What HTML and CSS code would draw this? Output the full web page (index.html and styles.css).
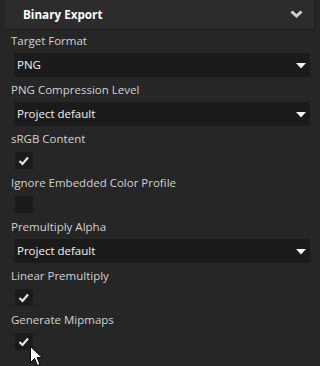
FILE: index.html
```html
<!DOCTYPE html>
<html>
<head>
<meta charset="utf-8">
<link rel="stylesheet" href="styles.css">
</head>
<body>
<div class="panel">
  <div class="header">
    <span class="title">Binary Export</span>
    <svg class="chevron" width="13" height="8" viewBox="0 0 13 8"><polyline points="1.5,1.5 6.5,6 11.5,1.5" fill="none" stroke="#cfcfcf" stroke-width="3"/></svg>
  </div>
  <div class="body">
    <div class="field">
      <div class="label">Target Format</div>
      <div class="select"><span>PNG</span><svg class="tri" width="10" height="6" viewBox="0 0 10 6"><polygon points="0,0 10,0 5,5.5" fill="#f2f2f2"/></svg></div>
    </div>
    <div class="field">
      <div class="label">PNG Compression Level</div>
      <div class="select"><span>Project default</span><svg class="tri" width="10" height="6" viewBox="0 0 10 6"><polygon points="0,0 10,0 5,5.5" fill="#f2f2f2"/></svg></div>
    </div>
    <div class="field check-field">
      <div class="label">sRGB Content</div>
      <div class="checkbox"><svg width="18" height="17" viewBox="0 0 18 17"><polyline points="4.5,9 7.5,12 13,5.5" fill="none" stroke="#e6e6e6" stroke-width="2.2"/></svg></div>
    </div>
    <div class="field check-field">
      <div class="label">Ignore Embedded Color Profile</div>
      <div class="checkbox"></div>
    </div>
    <div class="field">
      <div class="label">Premultiply Alpha</div>
      <div class="select"><span>Project default</span><svg class="tri" width="10" height="6" viewBox="0 0 10 6"><polygon points="0,0 10,0 5,5.5" fill="#f2f2f2"/></svg></div>
    </div>
    <div class="field check-field">
      <div class="label">Linear Premultiply</div>
      <div class="checkbox"><svg width="18" height="17" viewBox="0 0 18 17"><polyline points="4.5,9 7.5,12 13,5.5" fill="none" stroke="#e6e6e6" stroke-width="2.2"/></svg></div>
    </div>
    <div class="field check-field">
      <div class="label">Generate Mipmaps</div>
      <div class="checkbox"><svg width="18" height="17" viewBox="0 0 18 17"><polyline points="4.5,9 7.5,12 13,5.5" fill="none" stroke="#e6e6e6" stroke-width="2.2"/></svg></div>
    </div>
  </div>
  <svg class="cursor" width="13" height="21" viewBox="0 0 13 21"><polygon points="0.5,0.5 0.5,16.5 4.5,12.5 7.5,19.5 10,18.5 7,11.5 12,11.5" fill="#fff" stroke="#000" stroke-width="1"/></svg>
</div>
</body>
</html>
```
FILE: styles.css
```css
html, body {
  margin: 0;
  padding: 0;
  background: #262626;
}
body {
  width: 320px;
  height: 366px;
  overflow: hidden;
  font-family: "Open Sans", "Noto Sans", sans-serif;
  font-size: 11.5px;
}
.panel {
  position: relative;
  width: 320px;
  height: 366px;
  background: #262626;
}
.header {
  margin-left: 5px;
  width: 309px;
  height: 29px;
  background: #2c2c2c;
  border-right: 1px solid #1d1d1d;
  border-bottom: 1px solid #1d1d1d;
  display: flex;
  align-items: center;
  justify-content: space-between;
  box-sizing: content-box;
}
.title {
  margin-left: 18px;
  color: #ffffff;
  font-weight: bold;
  font-size: 11.7px;
  line-height: 16px;
  padding-bottom: 1px;
}
.chevron {
  margin-right: 11px;
  margin-bottom: 2px;
}
.body {
  padding: 3px 10px 0 11px;
  display: flex;
  flex-direction: column;
}
.field {
  display: flex;
  flex-direction: column;
  gap: 4px;
  margin-bottom: 5px;
}
.check-field {
  gap: 5px;
  margin-bottom: 6px;
}
.label {
  color: #d2d2d2;
  line-height: 16px;
  height: 16px;
  white-space: nowrap;
}
.select {
  margin-left: 3px;
  width: 296px;
  height: 24px;
  background: #1b1b1b;
  display: flex;
  align-items: center;
  justify-content: space-between;
  box-sizing: border-box;
  padding: 0 4px 0 3px;
  color: #f2f2f2;
  line-height: 16px;
}
.select span {
  padding-bottom: 1px;
}
.tri {
  margin-top: 1px;
}
.checkbox {
  margin-left: 4px;
  width: 18px;
  height: 17px;
  background: #1b1b1b;
}
.checkbox svg {
  display: block;
}
.cursor {
  position: absolute;
  left: 30px;
  top: 346px;
}
```
